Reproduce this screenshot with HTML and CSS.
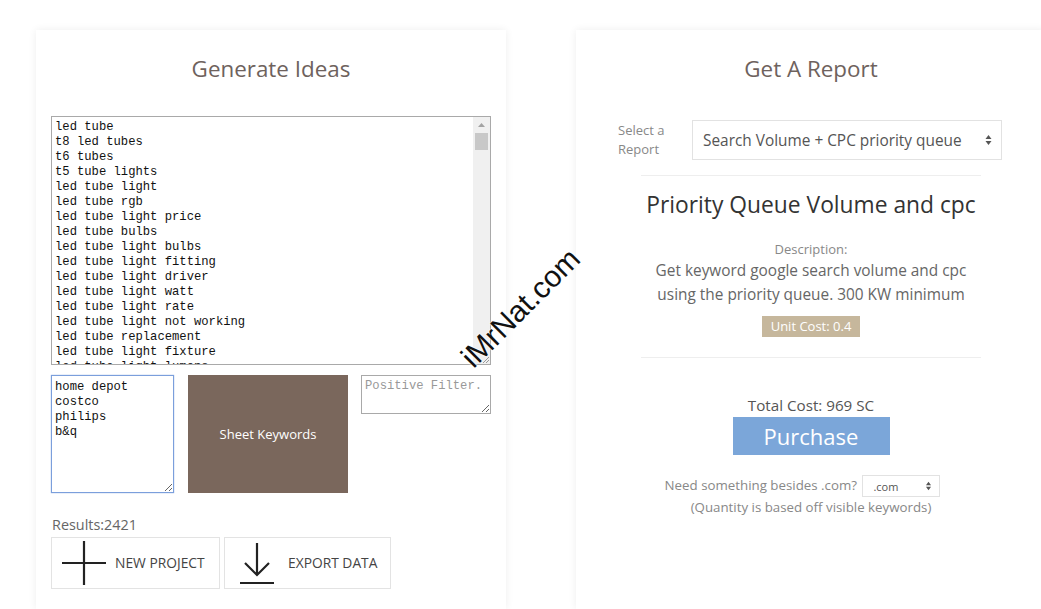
FILE: index.html
```html
<!DOCTYPE html>
<html lang="en">
<head>
    <meta charset="UTF-8">
    <meta name="viewport" content="width=device-width, initial-scale=1.0">
    <title>Keyword Ideas</title>
    <link rel="stylesheet" href="styles.css">
</head>
<body>
    <div class="page">
        <div class="card ideas">
            <h2>Generate Ideas</h2>
            <div class="kw-box">
                <textarea class="keywords" spellcheck="false">led tube
t8 led tubes
t6 tubes
t5 tube lights
led tube light
led tube rgb
led tube light price
led tube bulbs
led tube light bulbs
led tube light fitting
led tube light driver
led tube light watt
led tube light rate
led tube light not working
led tube replacement
led tube light fixture
led tube light lumens
led tube light wattage
led tube light circuit
led tube light 4ft
led tube light 5ft
led tube light 2ft
led tube light 18w
led tube light 20w
led tube light 36w
led tube light warm white
led tube light cool white
led tube light daylight
led tube light outdoor
led tube light waterproof</textarea>
                <!-- scrollbar drawn by hand, headless hides the native one -->
                <div class="fake-scroll">
                    <svg class="up" width="7" height="4" viewBox="0 0 7 4"><path d="M3.5 0L7 4H0Z" fill="#a3a3a3"/></svg>
                    <div class="thumb"></div>
                    <svg class="grip" width="10" height="10" viewBox="0 0 10 10"><path d="M9 3L3 9M9 6L6 9" stroke="#999" stroke-width="1"/></svg>
                </div>
            </div>

            <div class="tools">
                <textarea class="negative" spellcheck="false">home depot
costco
philips
b&amp;q</textarea>
                <button class="sheet">Sheet Keywords</button>
                <textarea class="positive" placeholder="Positive Filter."></textarea>
            </div>

            <div class="results">Results:2421</div>

            <div class="actions">
                <button class="action new">
                    <svg width="44" height="44" viewBox="0 0 44 44"><path d="M0 22H44M22 0V44" stroke="#222" stroke-width="2.2" fill="none"/></svg>
                    NEW PROJECT
                </button>
                <button class="action export">
                    <svg width="34" height="44" viewBox="0 0 34 44"><path d="M17 2V34M5 22L17 34L29 22M0 42H34" stroke="#222" stroke-width="2.2" fill="none"/></svg>
                    EXPORT DATA
                </button>
            </div>
        </div>

        <div class="card report">
            <h2>Get A Report</h2>
            <div class="select-row">
                <label for="reportType">Select a<br>Report</label>
                <div class="select-wrap big">
                    <select id="reportType">
                        <option>Search Volume + CPC priority queue</option>
                    </select>
                    <svg class="arrows" width="7" height="12" viewBox="0 0 7 12"><path d="M3.5 1L6.5 5H0.5Z M3.5 11L6.5 7H0.5Z" fill="#555"/></svg>
                </div>
            </div>
            <hr>
            <h3>Priority Queue Volume and cpc</h3>
            <div class="desc-label">Description:</div>
            <p class="desc">Get keyword google search volume and cpc<br>using the priority queue. 300 KW minimum</p>
            <span class="badge">Unit Cost: 0.4</span>
            <hr class="after-badge">
            <div class="total">Total Cost: 969 SC</div>
            <button class="purchase">Purchase</button>
            <div class="tld-row">
                Need something besides .com?
                <div class="select-wrap small">
                    <select>
                        <option>.com</option>
                    </select>
                    <svg class="arrows" width="7" height="12" viewBox="0 0 7 12"><path d="M3.5 1L6.5 5H0.5Z M3.5 11L6.5 7H0.5Z" fill="#555"/></svg>
                </div>
            </div>
            <div class="note">(Quantity is based off visible keywords)</div>
        </div>
    </div>

    <div class="watermark">iMrNat.com</div>
</body>
</html>
```

FILE: styles.css
```css
body {
    margin: 0;
    background: #fff;
    font-family: "Open Sans", Arial, sans-serif;
    color: #555;
    height: 609px;
    overflow: hidden;
}
.page {
    display: flex;
    gap: 70px;
    padding: 30px 0 0 36px;
}
.card {
    flex: 0 0 470px;
    height: 579px;
    box-sizing: border-box;
    background: #fff;
    box-shadow: 0 0 8px rgba(0, 0, 0, 0.07);
    padding: 24px 15px;
}
h2 {
    margin: 0 0 32px;
    font-size: 22.4px;
    font-weight: 400;
    line-height: 30px;
    text-align: center;
    color: #6e625d;
}
textarea {
    box-sizing: border-box;
    font-family: "Liberation Mono", "DejaVu Sans Mono", monospace;
    font-size: 12.2px;
    line-height: 15px;
    color: #111;
    border: 1px solid #a9a9a9;
    padding: 3px 3px 2px;
    margin: 0;
    display: block;
    outline: none;
}
.kw-box {
    position: relative;
    width: 440px;
}
.keywords {
    width: 440px;
    height: 249px;
    padding-right: 20px;
    resize: none;
    overflow: hidden;
}
.fake-scroll {
    position: absolute;
    top: 1px;
    right: 1px;
    bottom: 1px;
    width: 17px;
    background: #f0f0f0;
}
.fake-scroll .up {
    position: absolute;
    top: 6px;
    left: 5px;
}
.fake-scroll .thumb {
    position: absolute;
    top: 16px;
    left: 2px;
    width: 13px;
    height: 17px;
    background: #c8c8c8;
}
.fake-scroll .grip {
    position: absolute;
    right: 0;
    bottom: 0;
}
.tools {
    display: flex;
    align-items: flex-start;
    margin-top: 10px;
}
.negative {
    width: 123px;
    height: 118px;
    padding-top: 4px;
    border: 1px solid #7b9fdc;
    box-shadow: 0 0 1px #7b9fdc;
}
.positive {
    width: 130px;
    height: 39px;
    margin-left: 13px;
    color: #888;
}
.positive::placeholder {
    color: #999;
}
.sheet {
    width: 160px;
    height: 118px;
    margin-left: 14px;
    background: #7a675c;
    border: 0;
    color: #fff;
    font-family: "Open Sans", Arial, sans-serif;
    font-size: 13px;
    cursor: pointer;
}
.results {
    margin-top: 24px;
    font-size: 14.4px;
    line-height: 16px;
    color: #666;
    padding-left: 1px;
}
.actions {
    display: flex;
    gap: 4px;
    margin-top: 4px;
}
.action {
    display: flex;
    align-items: center;
    height: 52px;
    box-sizing: border-box;
    border: 1px solid #e3e3e3;
    padding-bottom: 2px;
    background: #fff;
    font-family: "Open Sans", Arial, sans-serif;
    font-size: 13.8px;
    color: #444;
    cursor: pointer;
}
.action.new {
    width: 169px;
    padding-left: 10px;
    gap: 9px;
}
.action.export {
    width: 167px;
    padding-left: 15px;
    gap: 14px;
}
.report {
    text-align: center;
}
.report h2 {
    margin-bottom: 36px;
}
.select-row {
    display: flex;
    align-items: center;
    padding-left: 27px;
}
.select-row label {
    width: 74px;
    text-align: left;
    font-size: 13px;
    line-height: 19px;
    color: #888;
}
.select-wrap {
    position: relative;
}
.select-wrap select {
    appearance: none;
    -webkit-appearance: none;
    background: #fff;
    border: 1px solid #e2e2e2;
    font-family: "Open Sans", Arial, sans-serif;
    color: #555;
    outline: none;
}
.select-wrap.big select {
    width: 310px;
    height: 40px;
    padding: 0 10px;
    font-size: 15.4px;
}
.select-wrap .arrows {
    position: absolute;
    right: 10px;
    top: 50%;
    margin-top: -6px;
    pointer-events: none;
}
.select-wrap.small {
    display: inline-block;
    vertical-align: middle;
    margin-left: 2px;
}
.select-wrap.small select {
    width: 78px;
    height: 22px;
    padding: 0 10px;
    font-size: 11px;
}
.select-wrap.small .arrows {
    right: 8px;
    transform: scale(0.85);
}
hr {
    width: 340px;
    margin: 15px auto 0;
    border: 0;
    border-top: 1px solid #eee;
}
h3 {
    margin: 14px 0 0;
    font-size: 22.8px;
    font-weight: 400;
    line-height: 30px;
    color: #333;
}
.desc-label {
    margin-top: 19px;
    font-size: 13px;
    line-height: 20px;
    color: #888;
}
.desc {
    margin: 0;
    font-size: 15.4px;
    line-height: 24px;
    color: #666;
}
.badge {
    display: inline-block;
    margin-top: 9px;
    padding: 0 9px;
    height: 21px;
    line-height: 21px;
    font-size: 13px;
    color: #fff;
    background: #c6b79c;
    vertical-align: top;
}
hr.after-badge {
    margin-top: 20px;
}
.total {
    margin-top: 37px;
    font-size: 15.2px;
    line-height: 20px;
    color: #555;
}
.purchase {
    width: 157px;
    height: 38px;
    margin-top: 2px;
    border: 0;
    background: #7ba6d9;
    color: #fff;
    font-family: "Open Sans", Arial, sans-serif;
    font-size: 22px;
    cursor: pointer;
}
.tld-row {
    margin-top: 20px;
    font-size: 13.3px;
    color: #888;
    padding-right: 17px;
}
.note {
    margin-top: 1px;
    font-size: 13.3px;
    color: #888;
}
.watermark {
    position: absolute;
    left: 444px;
    top: 291px;
    transform: rotate(-45deg);
    font-family: Arial, "Liberation Sans", sans-serif;
    font-size: 30px;
    color: #111;
    text-shadow: 0 0 2px #fff, 0 0 2px #fff;
    pointer-events: none;
}
```
